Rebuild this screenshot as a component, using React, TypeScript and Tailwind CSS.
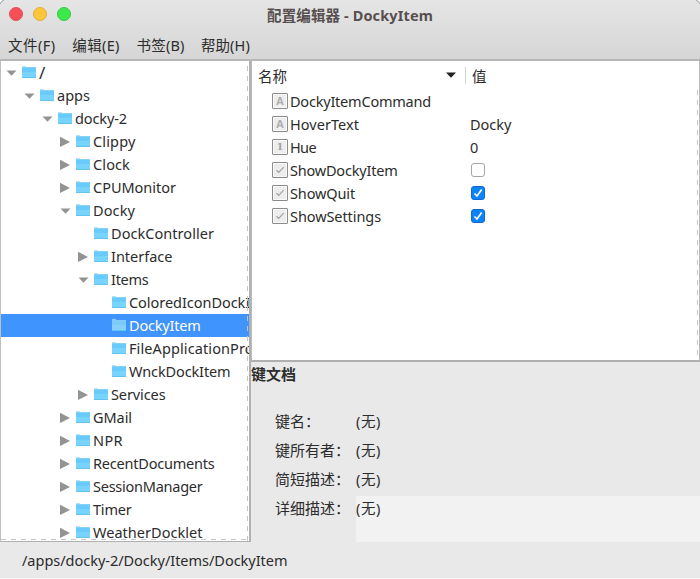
import { useLayoutEffect, useRef, useState } from "react";

type Open = "open" | "closed" | "leaf";

const tree: { label: string; depth: number; state: Open; width: number; selected?: boolean }[] = [
  { label: "/", depth: 0, state: "open", width: 6 },
  { label: "apps", depth: 1, state: "open", width: 33 },
  { label: "docky-2", depth: 2, state: "open", width: 52 },
  { label: "Clippy", depth: 3, state: "closed", width: 42.5 },
  { label: "Clock", depth: 3, state: "closed", width: 37 },
  { label: "CPUMonitor", depth: 3, state: "closed", width: 83 },
  { label: "Docky", depth: 3, state: "open", width: 42 },
  { label: "DockController", depth: 4, state: "leaf", width: 103 },
  { label: "Interface", depth: 4, state: "closed", width: 61.5 },
  { label: "Items", depth: 4, state: "open", width: 37.5 },
  { label: "ColoredIconDockItem", depth: 5, state: "leaf", width: 148 },
  { label: "DockyItem", depth: 5, state: "leaf", width: 71.5, selected: true },
  { label: "FileApplicationProvider", depth: 5, state: "leaf", width: 159 },
  { label: "WnckDockItem", depth: 5, state: "leaf", width: 101.5 },
  { label: "Services", depth: 4, state: "closed", width: 54.5 },
  { label: "GMail", depth: 3, state: "closed", width: 39 },
  { label: "NPR", depth: 3, state: "closed", width: 30 },
  { label: "RecentDocuments", depth: 3, state: "closed", width: 121.5 },
  { label: "SessionManager", depth: 3, state: "closed", width: 109.5 },
  { label: "Timer", depth: 3, state: "closed", width: 38.5 },
  { label: "WeatherDocklet", depth: 3, state: "closed", width: 109.5 },
];

const keys: { name: string; type: "A" | "1" | "check"; width: number; value?: string; valueWidth?: number; checked?: boolean }[] = [
  { name: "DockyItemCommand", type: "A", width: 141 },
  { name: "HoverText", type: "A", width: 69, value: "Docky", valueWidth: 41.5 },
  { name: "Hue", type: "1", width: 26, value: "0", valueWidth: 8 },
  { name: "ShowDockyItem", type: "check", width: 107.5, checked: false },
  { name: "ShowQuit", type: "check", width: 65, checked: true },
  { name: "ShowSettings", type: "check", width: 91, checked: true },
];

const menus = ["文件(F)", "编辑(E)", "书签(B)", "帮助(H)"];
const menuWidths = [47.5, 47.5, 48, 49];
const docs = ["键名：", "键所有者：", "简短描述：", "详细描述："];

function Label({ text, width }: { text: string; width: number }) {
  const ref = useRef<HTMLSpanElement>(null);
  const [spacing, setSpacing] = useState(0);
  useLayoutEffect(() => {
    if (ref.current) setSpacing((width - ref.current.getBoundingClientRect().width) / text.length);
  }, []);
  return (
    <span ref={ref} className="inline-block shrink-0 whitespace-pre" style={{ letterSpacing: spacing }}>
      {text}
    </span>
  );
}

function Folder({ selected }: { selected?: boolean }) {
  return (
    <svg className="h-[13px] w-[16px] shrink-0" viewBox="0 0 16 13" shapeRendering="crispEdges">
      <path d="M1 0h4v1H1z" fill={selected ? "#8fd0fb" : "#b5e4f9"} />
      <path d="M1 1h14v1H1z" fill={selected ? "#84cbf9" : "#85d2f6"} />
      <path d="M1 2h14v10H1z" fill={selected ? "#86d0fb" : "#78d3fd"} />
      <path d="M1 2h14v4H1z" fill={selected ? "#7bcbf9" : "#68cbfb"} />
      <path d="M1 11h14v1H1z" fill="#62c2f2" />
    </svg>
  );
}

function Arrow({ state }: { state: Open }) {
  return (
    <svg className="h-[12px] w-[12px] shrink-0" viewBox="0 0 12 12">
      {state === "open" && <path d="M1.5 3.5h10L6.5 8.8z" fill="#939393" />}
      {state === "closed" && <path d="M1 .8v10.2L11 5.9z" fill="#939393" />}
    </svg>
  );
}

function KeyIcon({ type }: { type: "A" | "1" | "check" }) {
  return (
    <span className="-mt-px flex h-4 w-4 shrink-0 items-center justify-center rounded-[1px] border border-[#8c8c8c] bg-[#ededed] shadow-[inset_0_0_0_1px_#fafafa]">
      {type === "A" && <span className="font-['Liberation_Sans',sans-serif] text-[11px] leading-none font-bold text-[#acacac]">A</span>}
      {type === "1" && <span className="font-['DejaVu_Serif',serif] text-[10px] leading-none font-bold text-[#a4a4a4]">1</span>}
      {type === "check" && (
        <svg className="h-3 w-3" viewBox="0 0 12 12">
          <path d="M2.5 6.2 4.7 8.3 9.7 3.1" fill="none" stroke="#a2a2a2" strokeWidth="1.2" />
        </svg>
      )}
    </span>
  );
}

function Checkbox({ checked }: { checked: boolean }) {
  return (
    <span className={"-mt-px flex h-[14px] w-[14px] items-center justify-center rounded-[3px] border " + (checked ? "border-[#1267d0] bg-[#0a84fa]" : "border-[#a5a5a5] bg-white")}>
      {checked && (
        <svg className="h-3 w-3" viewBox="0 0 12 12">
          <path d="M2.5 6.5 5 9 9.7 2.6" fill="none" stroke="#fff" strokeWidth="1.7" />
        </svg>
      )}
    </span>
  );
}

function DashV({ className }: { className: string }) {
  return <div className={"absolute w-px bg-[repeating-linear-gradient(to_bottom,#c6c6c6_0_5px,transparent_5px_10px)] " + className} />;
}

export default function App() {
  return (
    <div className="flex h-[579px] w-[700px] flex-col overflow-hidden bg-[#e9e9e9] font-['Noto_Sans','Noto_Sans_CJK_SC',sans-serif] text-[14.5px] leading-[23px] text-[#2c2c2c]">
      <header className="relative h-[61px] shrink-0 border-b-2 border-[#b7b7b7] bg-linear-to-b from-[#e5e5e5] to-[#d6d6d6]">
        <svg className="absolute top-0 left-0 h-[5px] w-[5px]" viewBox="0 0 5 5">
          <path d="M0 0h4Q1 1 0 4z" fill="#fff" />
          <path d="M0 4Q1 1 4 0" fill="none" stroke="#999" />
        </svg>
        <svg className="absolute top-0 right-0 h-[5px] w-[5px]" viewBox="0 0 5 5">
          <path d="M5 0H1Q4 1 5 4z" fill="#fff" />
          <path d="M5 4Q4 1 1 0" fill="none" stroke="#999" />
        </svg>
        <div className="grid h-[31px] grid-cols-[1fr_auto_1fr] items-center">
          <div className="flex gap-[10px] pb-[3px] pl-[9px]">
            <span className="h-[14px] w-[14px] rounded-full border border-[#df5259] bg-[#f64f57]" />
            <span className="h-[14px] w-[14px] rounded-full border border-[#dfad3c] bg-[#fbc639]" />
            <span className="h-[14px] w-[14px] rounded-full border border-[#3dc64b] bg-[#39ea49]" />
          </div>
          <h1 className="font-bold text-[#574f4f]">
            <Label text="配置编辑器 - DockyItem" width={166} />
          </h1>
        </div>
        <nav className="flex h-[29px] gap-4 pt-[3px] pl-2">
          {menus.map((m, i) => (
            <span key={m} className="w-[48.3px]">
              <Label text={m} width={menuWidths[i]} />
            </span>
          ))}
        </nav>
      </header>

      <main className="flex h-[481px] shrink-0">
        <aside className="relative w-[251px] shrink-0 overflow-hidden border-r-2 border-b border-l border-[#b0b0b0] border-l-[#c0c0c0] bg-white">
          {tree.map((n) => (
            <div key={n.label} className={"flex h-[23px] items-center " + (n.selected ? "bg-[#4094fe] text-white" : "")}>
              <div className="flex shrink-0 items-center pl-[4px]" style={{ marginLeft: n.depth * 18 }}>
                <Arrow state={n.state} />
                <span className="ml-[4px] flex">
                  <Folder selected={n.selected} />
                </span>
                <span className={n.depth === 0 ? "ml-[2px] flex text-[17px]" : "ml-[2px] flex"}>
                  <Label text={n.label} width={n.width} />
                </span>
              </div>
            </div>
          ))}
          <DashV className="top-[5px] right-px bottom-0" />
          <div className="absolute right-0 bottom-px left-0 h-px bg-[repeating-linear-gradient(to_right,#c6c6c6_0_5px,transparent_5px_10px)]" />
        </aside>

        <section className="flex min-w-0 flex-1 flex-col">
          <div className="relative h-[301px] shrink-0 border-r border-b-2 border-l border-[#bbbbbb] border-b-[#afafaf] bg-white">
            <div className="flex h-[29px] items-center pl-[6px]">
              <span className="w-[188px] pt-px">名称</span>
              <svg className="-mt-px h-[6px] w-[10px]" viewBox="0 0 10 6">
                <path d="M0 .5h10L5 5.8z" fill="#202020" />
              </svg>
              <span className="ml-[9px] h-[17px] w-px bg-[#d4d4d4]" />
              <span className="pt-px pl-[6px]">值</span>
            </div>
            {keys.map((k) => (
              <div key={k.name} className="flex h-[23px] items-center pl-[20px]">
                <KeyIcon type={k.type} />
                <span className="flex w-[182px] pl-[2px]">
                  <Label text={k.name} width={k.width} />
                </span>
                {k.value && (
                  <span className="flex">
                    <Label text={k.value} width={k.valueWidth!} />
                  </span>
                )}
                {k.checked !== undefined && (
                  <span className="pl-px">
                    <Checkbox checked={k.checked} />
                  </span>
                )}
              </div>
            ))}
            <DashV className="top-[29px] right-px bottom-0" />
          </div>

          <h2 className="h-[47px] shrink-0 pt-px text-[15px] font-bold">键文档</h2>
          {docs.map((d, i) => (
            <div key={d} className="flex h-[29px] shrink-0 pl-[24px]">
              <span className="w-[81px] text-[15px] leading-[25px]">{d}</span>
              <span className={i === 3 ? "h-[46px] flex-1 bg-[#f2f2f2] leading-[25px]" : "leading-[25px]"}>
                <Label text="(无)" width={25} />
              </span>
            </div>
          ))}
        </section>
      </main>

      <footer className="flex flex-1 border-b border-[#f8f8f8] pt-[7px] pl-[22px]">
        <Label text="/apps/docky-2/Docky/Items/DockyItem" width={265.5} />
      </footer>
    </div>
  );
}
